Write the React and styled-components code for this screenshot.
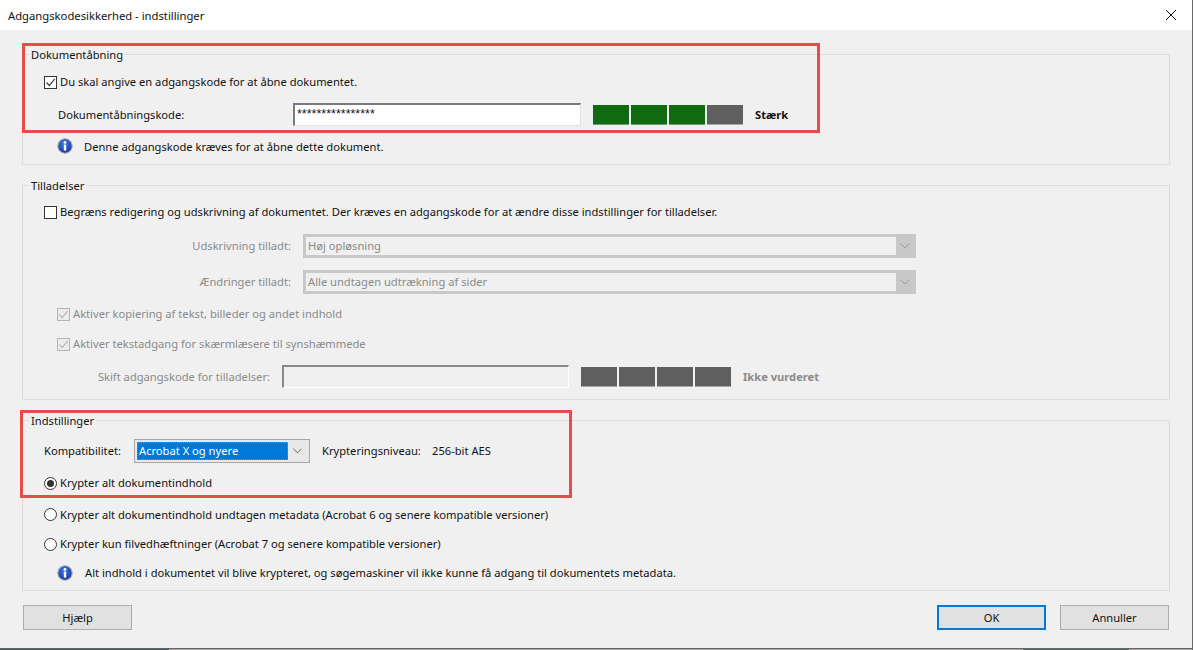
import React from "react";
import styled, { createGlobalStyle, css } from "styled-components";

const Global = createGlobalStyle`
  html, body { margin: 0; padding: 0; background: #f0f0f0; }
  body { font-family: "Noto Sans", "Open Sans", sans-serif; font-size: 11.17px; color: #111; overflow: hidden; }
  * { box-sizing: border-box; }
`;

const Dialog = styled.div`
  position: relative;
  width: 1193px;
  height: 650px;
  display: flex;
  flex-direction: column;
  background: #f0f0f0;
  border-right: 1px solid #6a6a6a;
  overflow: hidden;
`;
const TitleBar = styled.div`
  height: 30px;
  flex: none;
  background: #fff;
  display: flex;
  align-items: center;
  justify-content: space-between;
  padding: 0 15px 0 8px;
  font-size: 11.25px;
`;
const Content = styled.div`
  flex: 1;
  display: flex;
  flex-direction: column;
  padding: 24px 22px 0 22px;
`;
const Group = styled.section`
  position: relative;
  height: ${(p) => p.$h}px;
  margin-bottom: 20px;
  border: 1px solid #dcdcdc;
  padding-left: 21px;
`;
const Legend = styled.div`
  position: absolute;
  left: 6px;
  top: -8px;
  padding: 0 2px;
  background: #f0f0f0;
  line-height: 16px;
`;
const Row = styled.div`
  height: 20px;
  margin-top: ${(p) => p.$mt || 0}px;
  margin-left: ${(p) => p.$ml || 0}px;
  display: flex;
  align-items: center;
  color: ${(p) => (p.$off ? "#8a8a8a" : "#111")};
`;
const Text = styled.span`
  padding-bottom: ${(p) => (p.$low ? 0 : 2)}px;
  white-space: nowrap;
`;
const Check = styled.span`
  width: 13px;
  height: 13px;
  flex: none;
  margin-right: 3px;
  border: 1px solid ${(p) => (p.$off ? "#b4b4b4" : "#333")};
  background: ${(p) => (p.$off ? "#ececec" : "#fff")};
  display: inline-flex;
  align-items: center;
  justify-content: center;
`;
const Radio = styled.span`
  width: 13px;
  height: 13px;
  flex: none;
  margin-right: 3px;
  border-radius: 50%;
  border: 1px solid #333;
  background: #fff;
  display: inline-flex;
  align-items: center;
  justify-content: center;
  ${(p) =>
    p.$on &&
    css`
      &::after {
        content: "";
        width: 7px;
        height: 7px;
        border-radius: 50%;
        background: #333;
      }
    `}
`;
const RightLabel = styled.span`
  width: ${(p) => p.$w}px;
  flex: none;
  text-align: right;
  margin-right: 12px;
  padding-bottom: 2px;
`;
const PlainLabel = styled.span`
  width: ${(p) => p.$w}px;
  flex: none;
  padding-bottom: 2px;
`;
const PasswordInput = styled.div`
  width: ${(p) => p.$w}px;
  height: 23px;
  flex: none;
  margin: 0 12px 1px 0;
  padding: 2px 0 0 2px;
  font-family: "Liberation Sans", sans-serif;
  font-size: 12.5px;
  line-height: 14px;
  background: ${(p) => (p.$off ? "#f0f0f0" : "#fff")};
  border-top: 2px solid #7a7a7a;
  border-left: 2px solid #7a7a7a;
  border-right: 1px solid #e2e2e2;
  border-bottom: 1px solid #e2e2e2;
  ${(p) =>
    p.$off &&
    css`
      border-top-color: #8a8a8a;
      border-left-color: #8a8a8a;
      border-right-color: #fff;
      border-bottom-color: #fff;
    `}
`;
const Meter = styled.div`
  display: flex;
  gap: 2px;
  margin-right: 12px;
`;
const Segment = styled.span`
  width: 36px;
  height: 20px;
  background: ${(p) => (p.$on ? "#106a11" : "#5f5f5f")};
  border-bottom: 1px solid ${(p) => (p.$on ? "#6a9f6a" : "#a8a8a8")};
`;
const Strength = styled.span`
  font-weight: 700;
  padding-bottom: 2px;
  color: ${(p) => (p.$off ? "#8a8a8a" : "#111")};
`;
const Info = styled.svg`
  width: 16px;
  height: 16px;
  flex: none;
  margin-right: ${(p) => p.$mr}px;
`;
const DisabledSelect = styled.div`
  width: 613px;
  height: 24px;
  display: flex;
  background: #f0f0f0;
  border: 3px solid #c8c8c8;
  padding-left: 2px;
  line-height: 18px;
  color: #8a8a8a;
  justify-content: space-between;
`;
const Arrow = styled.span`
  width: 18px;
  margin-right: -1px;
  background: #c8c8c8;
  display: flex;
  align-items: center;
  justify-content: center;
`;
const ComboBox = styled.div`
  width: 176px;
  height: 24px;
  flex: none;
  margin-right: 12px;
  padding: 2px;
  display: flex;
  justify-content: space-between;
  background: #e8e8e8;
  border: 1px solid #a6a6a6;
`;
const Selected = styled.span`
  width: 153px;
  background: #0078d7;
  color: #fff;
  line-height: 17px;
  padding-left: 2px;
  outline: 1px dotted #c97b2d;
  outline-offset: -1px;
`;
const ComboArrow = styled.span`
  width: 19px;
  display: flex;
  align-items: center;
  justify-content: center;
`;
const Footer = styled.div`
  display: flex;
  justify-content: space-between;
  margin: -6px 0 0 1px;
  width: 1146px;
`;
const Actions = styled.div`
  display: flex;
  gap: 14px;
`;
const Button = styled.button`
  width: 109px;
  height: 25px;
  padding: 0;
  font: inherit;
  color: #111;
  background: #e1e1e1;
  border: ${(p) => (p.$primary ? "2px solid #0078d7" : "1px solid #adadad")};
`;
const DesktopEdge = styled.div`
  position: absolute;
  left: 0;
  right: 0;
  bottom: 0;
  height: 2px;
  border-top: 1px solid #666;
  background: linear-gradient(90deg, #41565a 0 169px, #ababab 169px 1023px, #4f6660 1023px 1129px, #ababab 1129px);
`;
const Highlight = styled.div`
  position: absolute;
  left: ${(p) => p.$x}px;
  top: ${(p) => p.$y}px;
  width: ${(p) => p.$w}px;
  height: ${(p) => p.$h}px;
  border: 3px solid #e94b4b;
  pointer-events: none;
`;

const Tick = ({ off }) => (
  <svg width="11" height="11" viewBox="0 0 11 11">
    <path d="M1.5 5.5 L4.3 8.5 L9.8 1.8" fill="none" stroke={off ? "#b8b8b8" : "#444"} strokeWidth="1.2" />
  </svg>
);
const Chevron = ({ c, w = 10 }) => (
  <svg width={w} height="6" viewBox="0 0 10 6">
    <path d="M0.5 0.5 L5 5 L9.5 0.5" fill="none" stroke={c} strokeWidth="1" />
  </svg>
);
const InfoIcon = ({ mr }) => (
  <Info $mr={mr} viewBox="0 0 16 16">
    <defs>
      <radialGradient id="ig" cx="45%" cy="35%" r="70%">
        <stop offset="0" stopColor="#3f7ae0" />
        <stop offset="1" stopColor="#12339a" />
      </radialGradient>
    </defs>
    <circle cx="8" cy="8" r="7.2" fill="url(#ig)" stroke="#a4aab8" strokeWidth="1.1" />
    <circle cx="8" cy="4.4" r="1.4" fill="#fff" />
    <rect x="6.8" y="6.6" width="2.4" height="6" fill="#fff" />
  </Info>
);
const StrengthMeter = ({ on }) => (
  <Meter>
    {[0, 1, 2, 3].map((i) => (
      <Segment key={i} $on={i < on} />
    ))}
  </Meter>
);

export default function App() {
  return (
    <Dialog>
      <Global />
      <TitleBar>
        <span>Adgangskodesikkerhed - indstillinger</span>
        <svg width="12" height="12" viewBox="0 0 12 12">
          <path d="M1 1 L11 11 M11 1 L1 11" stroke="#111" strokeWidth="1" />
        </svg>
      </TitleBar>
      <Content>
        <Group $h={111}>
          <Legend>Dokumentåbning</Legend>
          <Row $mt={17}>
            <Check><Tick /></Check>
            <Text>Du skal angive en adgangskode for at åbne dokumentet.</Text>
          </Row>
          <Row $mt={13} $ml={14}>
            <PlainLabel $w={235}>Dokumentåbningskode:</PlainLabel>
            <PasswordInput $w={288}>****************</PasswordInput>
            <StrengthMeter on={3} />
            <Strength>Stærk</Strength>
          </Row>
          <Row $mt={11} $ml={13}>
            <InfoIcon mr={11} />
            <Text $low>Denne adgangskode kræves for at åbne dette dokument.</Text>
          </Row>
        </Group>
        <Group $h={215}>
          <Legend>Tilladelser</Legend>
          <Row $mt={16}>
            <Check />
            <Text>Begræns redigering og udskrivning af dokumentet. Der kræves en adgangskode for at ændre disse indstillinger for tilladelser.</Text>
          </Row>
          <Row $mt={14} $off>
            <RightLabel $w={247}>Udskrivning tilladt:</RightLabel>
            <DisabledSelect>Høj opløsning<Arrow><Chevron c="#9a9a9a" /></Arrow></DisabledSelect>
          </Row>
          <Row $mt={16} $off>
            <RightLabel $w={247}>Ændringer tilladt:</RightLabel>
            <DisabledSelect>Alle undtagen udtrækning af sider<Arrow><Chevron c="#9a9a9a" /></Arrow></DisabledSelect>
          </Row>
          <Row $mt={12} $ml={13} $off>
            <Check $off><Tick off /></Check>
            <Text>Aktiver kopiering af tekst, billeder og andet indhold</Text>
          </Row>
          <Row $mt={10} $ml={13} $off>
            <Check $off><Tick off /></Check>
            <Text>Aktiver tekstadgang for skærmlæsere til synshæmmede</Text>
          </Row>
          <Row $mt={13} $off>
            <RightLabel $w={226}>Skift adgangskode for tilladelser:</RightLabel>
            <PasswordInput $w={287} $off />
            <StrengthMeter on={0} />
            <Strength $off>Ikke vurderet</Strength>
          </Row>
        </Group>
        <Group $h={171}>
          <Legend>Indstillinger</Legend>
          <Row $mt={20}>
            <PlainLabel $w={90}>Kompatibilitet:</PlainLabel>
            <ComboBox>
              <Selected>Acrobat X og nyere</Selected>
              <ComboArrow><Chevron c="#555" w={9} /></ComboArrow>
            </ComboBox>
            <PlainLabel $w={110}>Krypteringsniveau:</PlainLabel>
            <Text>256-bit AES</Text>
          </Row>
          <Row $mt={12}>
            <Radio $on />
            <Text>Krypter alt dokumentindhold</Text>
          </Row>
          <Row $mt={11}>
            <Radio />
            <Text $low>Krypter alt dokumentindhold undtagen metadata (Acrobat 6 og senere kompatible versioner)</Text>
          </Row>
          <Row $mt={10}>
            <Radio />
            <Text>Krypter kun filvedhæftninger (Acrobat 7 og senere kompatible versioner)</Text>
          </Row>
          <Row $mt={9} $ml={13}>
            <InfoIcon mr={12} />
            <Text>Alt indhold i dokumentet vil blive krypteret, og søgemaskiner vil ikke kunne få adgang til dokumentets metadata.</Text>
          </Row>
        </Group>
        <Footer>
          <Button>Hjælp</Button>
          <Actions>
            <Button $primary>OK</Button>
            <Button>Annuller</Button>
          </Actions>
        </Footer>
      </Content>
      <Highlight $x={22} $y={43} $w={798} $h={90} />
      <Highlight $x={20} $y={410} $w={552} $h={88} />
      <DesktopEdge />
    </Dialog>
  );
}
